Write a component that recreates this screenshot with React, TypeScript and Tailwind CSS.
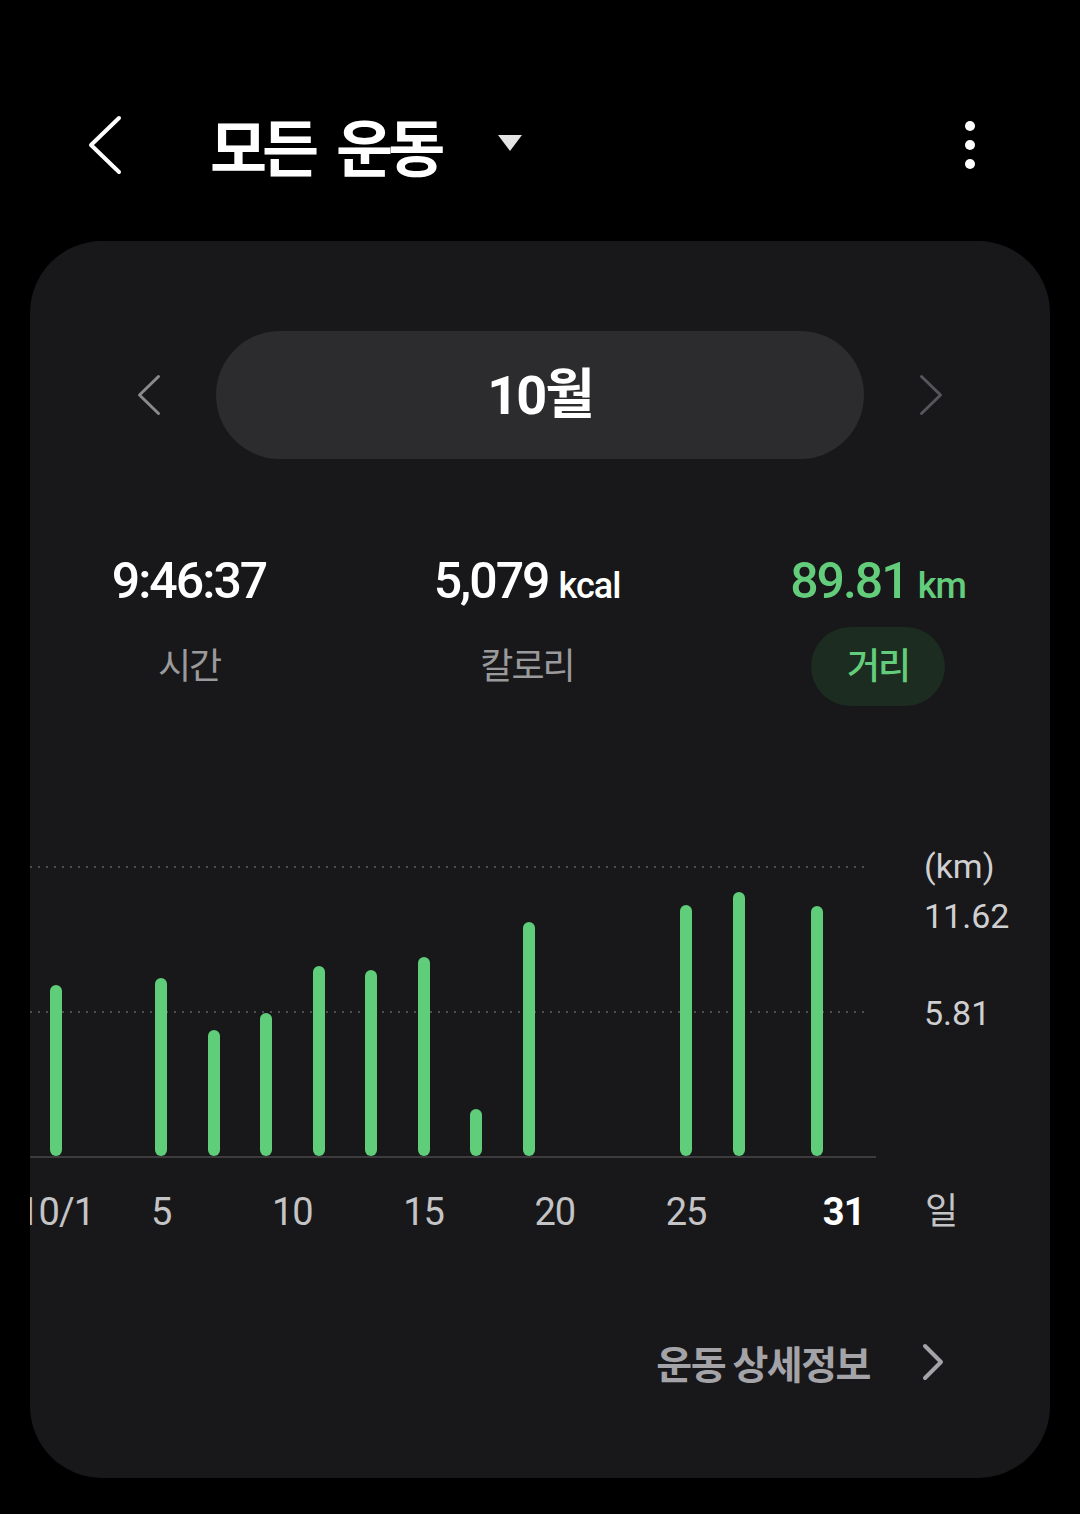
// 일별 거리 (km) — 막대 높이는 px로 환산
const days: Record<number, number> = {
  1: 171, 5: 178, 7: 126, 9: 143, 11: 190, 13: 186, 15: 199,
  17: 47, 19: 234, 25: 251, 27: 264, 30: 250,
};

const xLabels: Record<number, string> = {
  1: "10/1", 5: "5", 10: "10", 15: "15", 20: "20", 25: "25", 31: "31",
};

const dayList = Array.from({ length: 31 }, (_, i) => i + 1);

function Chevron({ dir, w, h, color, stroke }: { dir: "left" | "right"; w: number; h: number; color: string; stroke: number }) {
  const s = stroke / 2 + 1;
  const d =
    dir === "left"
      ? `M${w - s} ${s} L${s} ${h / 2} L${w - s} ${h - s}`
      : `M${s} ${s} L${w - s} ${h / 2} L${s} ${h - s}`;
  return (
    <svg width={w} height={h} viewBox={`0 0 ${w} ${h}`} className="shrink-0">
      <path d={d} fill="none" stroke={color} strokeWidth={stroke} strokeLinecap="round" strokeLinejoin="round" />
    </svg>
  );
}

function Stat({ value, unit, label, active }: { value: string; unit?: string; label: string; active?: boolean }) {
  return (
    <div className="w-[318px] flex flex-col items-center">
      <div className={`flex items-baseline h-[60px] ${active ? "text-[#63cd7c]" : "text-white"}`}>
        <span className="text-[50px] leading-[60px] tracking-[-2px] font-medium">{value}</span>
        {unit && <span className="ml-[10px] text-[36px] tracking-[-1px] font-medium">{unit}</span>}
      </div>
      <div
        className={`mt-[16px] h-[79px] px-[36px] rounded-full flex items-center text-[36px] tracking-[-2px] ${
          active ? "bg-[#1c2c21] text-[#63cd7c] font-medium" : "text-[#9a9a9c]"
        }`}
      >
        {label}
      </div>
    </div>
  );
}

export default function App() {
  return (
    <div className="h-[1514px] w-[1080px] overflow-hidden bg-black pt-[110px] font-['Roboto','Noto_Sans_CJK_KR',sans-serif]">
      {/* Header */}
      <div className="flex items-center h-[70px] mb-[61px] pl-[88px] pr-[105px]">
        <Chevron dir="left" w={34} h={60} color="#ffffff" stroke={4} />
        <h1 className="ml-[88px] flex text-white font-bold text-[62px] tracking-[-5px] leading-none font-['Noto_Sans_CJK_KR',sans-serif]">
          <span>모든</span>
          <span className="ml-[22px]">운동</span>
        </h1>
        <svg width="26" height="18" viewBox="0 0 26 18" className="ml-[57px] mt-[-4px]">
          <path d="M1 1 H25 L13 17 Z" fill="#e4e4e4" />
        </svg>
        <div className="ml-auto flex flex-col gap-[9px] items-center">
          <span className="w-[10px] h-[10px] rounded-full bg-white" />
          <span className="w-[10px] h-[10px] rounded-full bg-white" />
          <span className="w-[10px] h-[10px] rounded-full bg-white" />
        </div>
      </div>

      {/* Card */}
      <div className="mx-[30px] w-[1020px] h-[1237px] bg-[#18181a] rounded-[72px] overflow-hidden">
        {/* Month selector */}
        <div className="pt-[90px] flex items-center">
          <div className="ml-[107px]">
            <Chevron dir="left" w={24} h={42} color="#8a8a8c" stroke={3} />
          </div>
          <div className="ml-[55px] w-[648px] h-[128px] rounded-full bg-[#2c2c2e] flex items-center justify-center">
            <span className="text-white font-bold text-[54px] tracking-[-2px]">10월</span>
          </div>
          <div className="ml-[55px]">
            <Chevron dir="right" w={24} h={42} color="#55555a" stroke={3} />
          </div>
        </div>

        {/* Summary */}
        <div className="mt-[92px] flex">
          <Stat value="9:46:37" label="시간" />
          <div className="ml-[20px]">
            <Stat value="5,079" unit="kcal" label="칼로리" />
          </div>
          <div className="ml-[33px]">
            <Stat value="89.81" unit="km" label="거리" active />
          </div>
        </div>

        {/* Chart */}
        <div className="mt-[160px] flex">
          <div className="relative w-[846px] h-[292px] border-b-2 border-[#3c3c3e]">
            <svg className="absolute left-0 top-0" width="840" height="2">
              <line x1="0" y1="1" x2="840" y2="1" stroke="#4e4e52" strokeWidth="2" strokeDasharray="2 6" />
            </svg>
            <svg className="absolute left-0 top-[145px]" width="840" height="2">
              <line x1="0" y1="1" x2="840" y2="1" stroke="#4e4e52" strokeWidth="2" strokeDasharray="2 6" />
            </svg>
            <div className="relative flex items-end h-full pl-[13px]">
              {dayList.map((d) => (
                <div key={d} className="w-[26.25px] h-full flex items-end justify-center">
                  {days[d] && (
                    <div className="w-[12px] rounded-full bg-[#5fcd79]" style={{ height: days[d] }} />
                  )}
                </div>
              ))}
            </div>
          </div>
          <div className="ml-[48px] -mt-[20px] flex flex-col text-[#cfcfd1] text-[34px] leading-[40px]">
            <span>(km)</span>
            <span className="mt-[10px]">11.62</span>
            <span className="mt-[57px]">5.81</span>
          </div>
        </div>

        {/* X axis */}
        <div className="mt-[32px] flex items-center h-[44px]">
          <div className="w-[846px] flex pl-[13px]">
            {dayList.map((d) => (
              <div key={d} className="w-[26.25px] flex justify-center">
                {xLabels[d] && (
                  <span
                    className={`whitespace-nowrap text-[38px] leading-[44px] tracking-[-1px] ${
                      d === 31 ? "text-white font-bold" : "text-[#c4c4c6]"
                    }`}
                  >
                    {xLabels[d]}
                  </span>
                )}
              </div>
            ))}
          </div>
          <span className="ml-[49px] text-[#c4c4c6] text-[36px] leading-[44px]">일</span>
        </div>

        {/* Detail link */}
        <div className="mt-[103px] flex items-center justify-end pr-[106px] h-[50px]">
          <span className="text-[#a4a4a8] font-bold text-[39px] tracking-[-1.5px] font-['Noto_Sans_CJK_KR',sans-serif]">
            운동 상세정보
          </span>
          <div className="ml-[52px]">
            <Chevron dir="right" w={22} h={38} color="#a4a4a8" stroke={4} />
          </div>
        </div>
      </div>
    </div>
  );
}
